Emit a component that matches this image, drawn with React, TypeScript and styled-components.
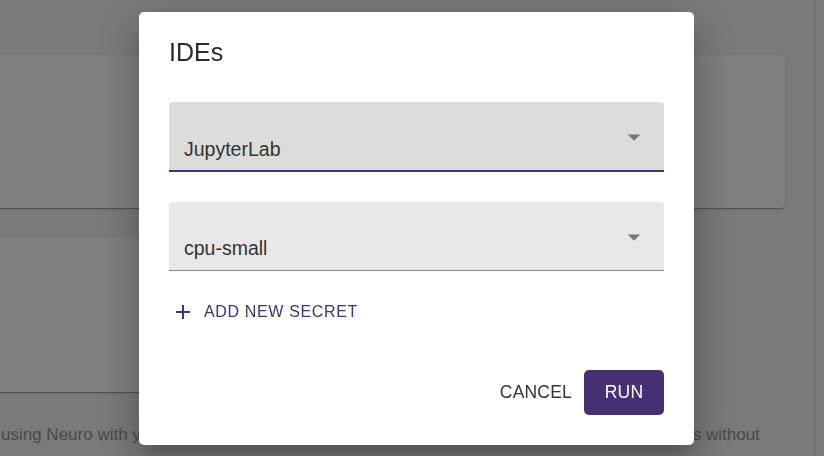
import React from "react";
import styled, { createGlobalStyle } from "styled-components";

const GlobalStyle = createGlobalStyle`
  html, body {
    margin: 0;
    padding: 0;
    height: 100%;
    overflow: hidden;
  }
  body {
    font-family: "Liberation Sans", Arial, sans-serif;
    background: #f4f4f4;
  }
`;

const Page = styled.div`
  display: flex;
  height: 100vh;
  overflow: hidden;
`;

const Main = styled.main`
  flex: 0 0 815px;
  display: flex;
  flex-direction: column;
  padding: 55px 30px 0 0;
  box-sizing: border-box;
`;

const Side = styled.aside`
  flex: 1;
  border-left: 1px solid #dcdcdc;
  background: #f6f6f6;
`;

interface CardProps {
  readonly width?: string;
  readonly height: number;
}

const Card = styled.div<CardProps>`
  margin-left: -20px;
  width: ${(p) => p.width || "auto"};
  height: ${(p) => p.height}px;
  background: #ffffff;
  border-radius: 4px;
  box-shadow: 0 2px 1px -1px rgba(0, 0, 0, 0.2), 0 1px 1px 0 rgba(0, 0, 0, 0.14),
    0 1px 3px 0 rgba(0, 0, 0, 0.12);
  & + & {
    margin-top: 29px;
  }
`;

const Intro = styled.p`
  margin: 33px 0 0 1px;
  font-size: 17px;
  line-height: 20px;
  color: #959595;
  white-space: nowrap;
`;

const Backdrop = styled.div`
  position: fixed;
  inset: 0;
  background: rgba(0, 0, 0, 0.5);
  display: flex;
  align-items: center;
  justify-content: center;
  padding-left: 9px;
`;

const Dialog = styled.div`
  width: 555px;
  height: 433px;
  box-sizing: border-box;
  background: #ffffff;
  border-radius: 5px;
  padding: 23px 30px 30px;
  display: flex;
  flex-direction: column;
  box-shadow: 0 11px 15px -7px rgba(0, 0, 0, 0.2), 0 24px 38px 3px rgba(0, 0, 0, 0.14),
    0 9px 46px 8px rgba(0, 0, 0, 0.12);
`;

const Title = styled.h2`
  margin: 0;
  padding-top: 2px;
  font-size: 25px;
  line-height: 30px;
  font-weight: 400;
  color: #2b2b2b;
`;

const Fields = styled.div`
  margin-top: 35px;
  display: flex;
  flex-direction: column;
  gap: 30px;
`;

interface SelectProps {
  readonly focused?: boolean;
}

const SelectBox = styled.div<SelectProps>`
  position: relative;
  display: flex;
  align-items: flex-end;
  height: ${(p) => (p.focused ? 70 : 69)}px;
  box-sizing: border-box;
  padding: 0 15px ${(p) => (p.focused ? 9 : 10)}px;
  background: ${(p) => (p.focused ? "#dcdcdc" : "#e8e8e8")};
  border-radius: 4px 4px 0 0;
  border-bottom: ${(p) => (p.focused ? "2px solid #472f73" : "1px solid #8a8a8a")};
  font-size: 19.5px;
  line-height: 23px;
  color: #333333;
`;

const Arrow = styled.svg`
  position: absolute;
  right: 15px;
  top: 20px;
  width: 30px;
  height: 30px;
  fill: #757575;
`;

const AddButton = styled.button`
  align-self: flex-start;
  margin-top: 23px;
  display: flex;
  align-items: center;
  gap: 14px;
  padding: 9px 7px;
  border: none;
  background: none;
  font-family: inherit;
  font-size: 16px;
  letter-spacing: 0.65px;
  color: #472f73;
  cursor: pointer;
`;

const Actions = styled.div`
  margin-top: auto;
  display: flex;
  justify-content: flex-end;
  align-items: center;
  gap: 2px;
`;

interface ActionProps {
  readonly primary?: boolean;
}

const ActionButton = styled.button<ActionProps>`
  height: 45px;
  min-width: 80px;
  padding: 0 10px;
  border: none;
  border-radius: 5px;
  font-family: inherit;
  font-size: 17.5px;
  letter-spacing: 0.2px;
  background: ${(p) => (p.primary ? "#472f73" : "transparent")};
  color: ${(p) => (p.primary ? "#ffffff" : "#333333")};
  cursor: pointer;
`;

const Select = ({ value, focused }: { value: string; focused?: boolean }) => (
  <SelectBox focused={focused}>
    {value}
    <Arrow viewBox="0 0 24 24">
      <path d="M7 10l5 5 5-5z" />
    </Arrow>
  </SelectBox>
);

const App = () => {
  return (
    <>
      <GlobalStyle />
      <Page>
        <Main>
          <Card height={153} />
          <Card height={155} width="620px" />
          <Intro>
            using Neuro with your JupyterLab, VS Code, and other development tools to run experiments without
          </Intro>
        </Main>
        <Side />
      </Page>
      <Backdrop>
        <Dialog>
          <Title>IDEs</Title>
          <Fields>
            <Select value="JupyterLab" focused />
            <Select value="cpu-small" />
          </Fields>
          <AddButton>
            <svg width="14" height="14" viewBox="0 0 14 14">
              <path d="M7 0v14M0 7h14" stroke="#472f73" strokeWidth="2" />
            </svg>
            ADD NEW SECRET
          </AddButton>
          <Actions>
            <ActionButton>CANCEL</ActionButton>
            <ActionButton primary>RUN</ActionButton>
          </Actions>
        </Dialog>
      </Backdrop>
    </>
  );
};

export default App;
